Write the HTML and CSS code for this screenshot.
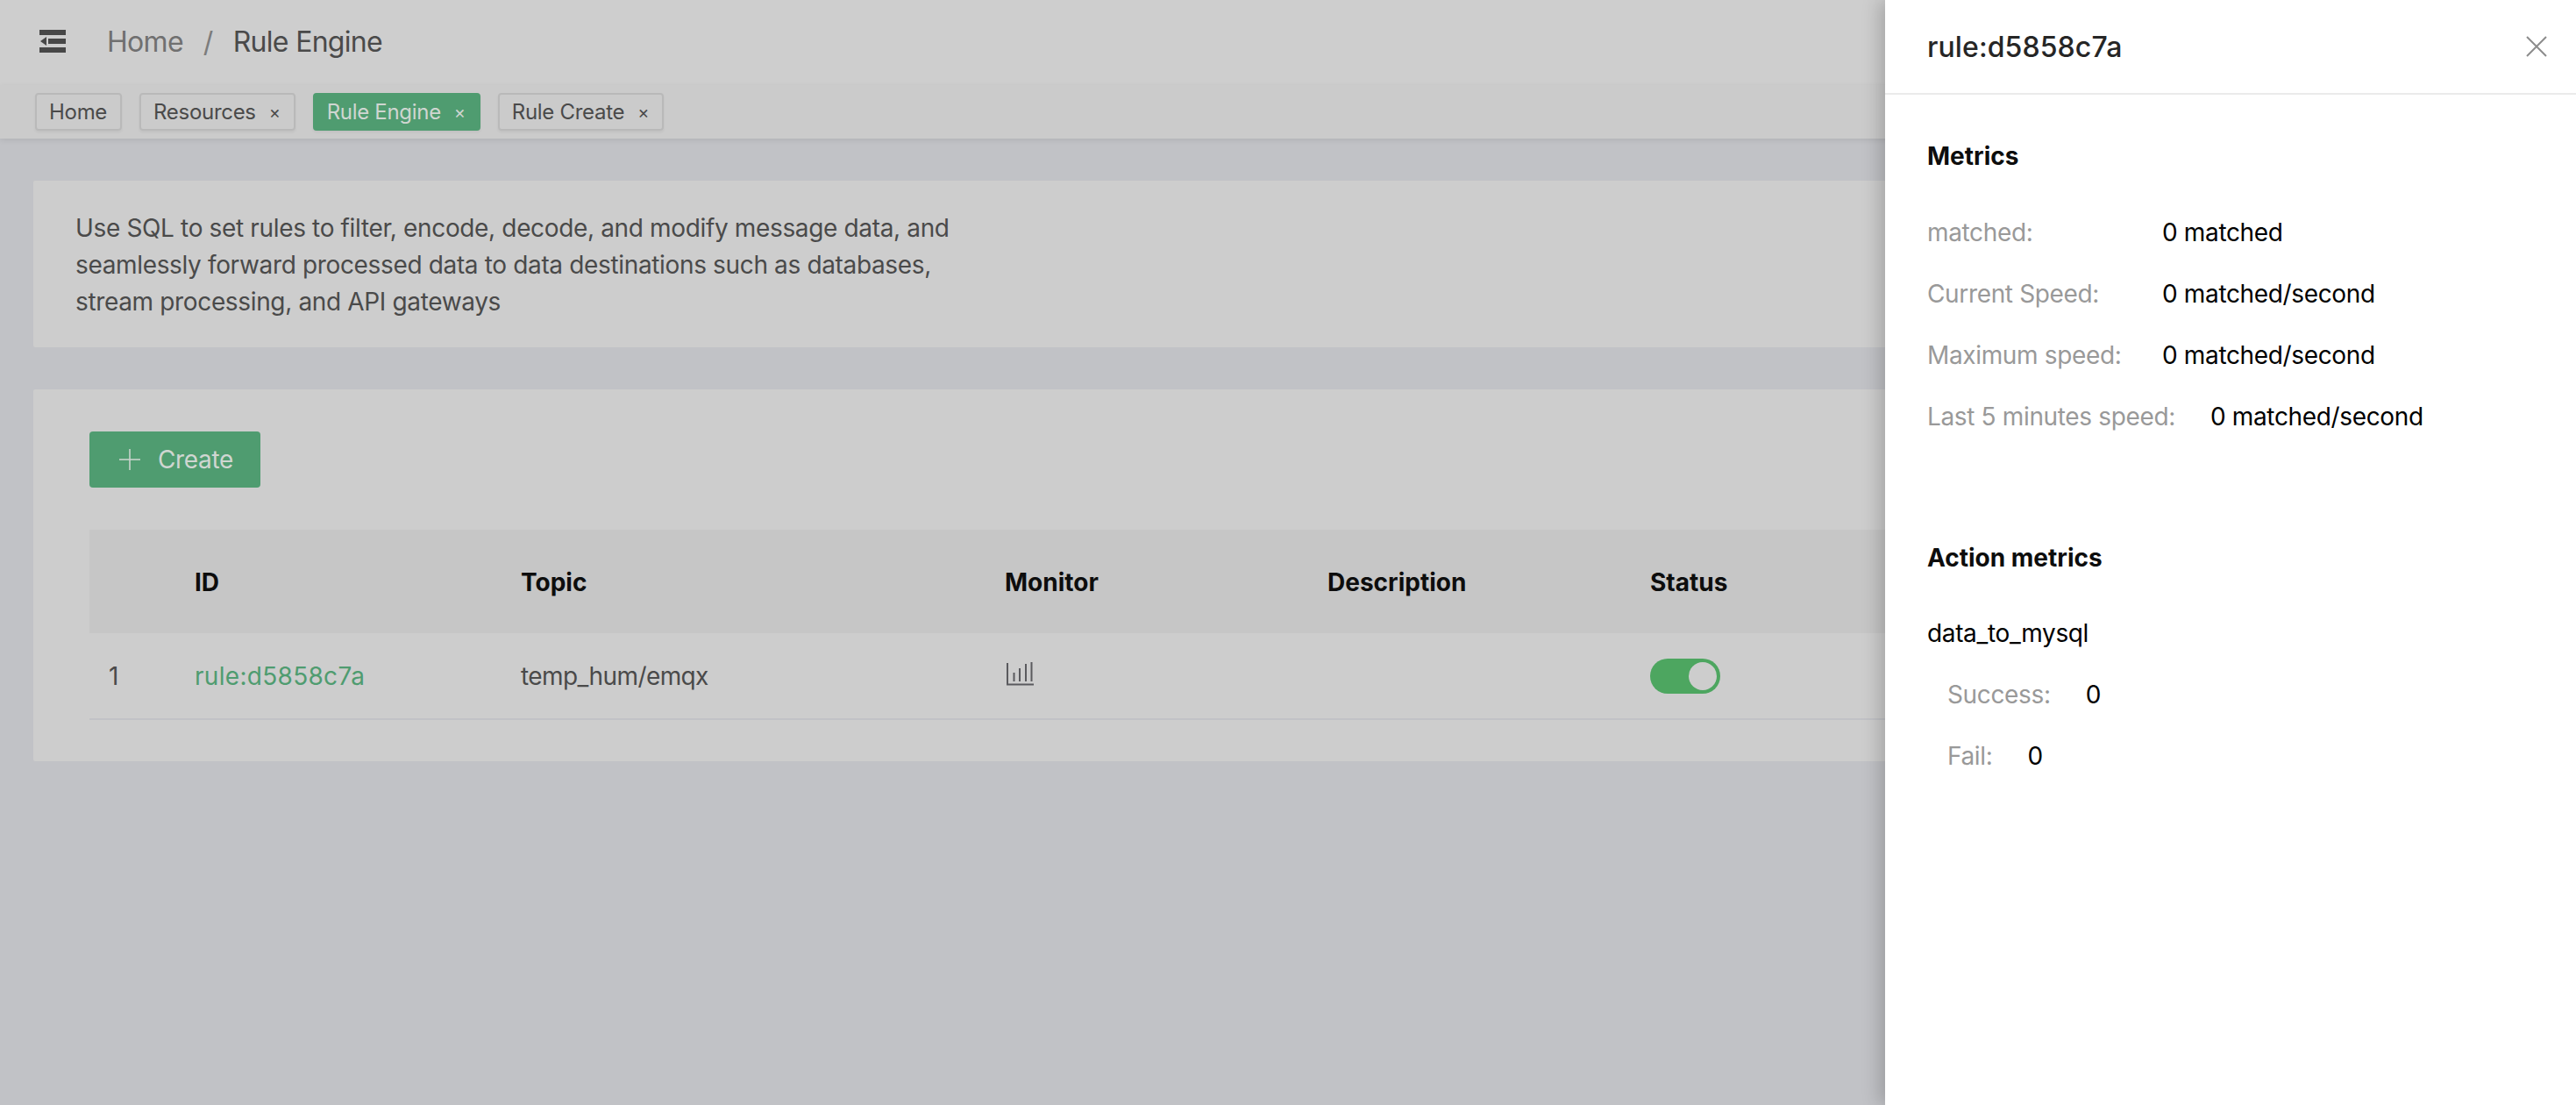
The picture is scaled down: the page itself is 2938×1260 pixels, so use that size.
FILE: index.html
```html
<!DOCTYPE html>
<html lang="en">
  <head>
    <meta charset="UTF-8" />
    <title>Rule Engine</title>
    <link rel="stylesheet" href="styles.css">
  </head>
  <body>
    <div class="app">
      <header class="topbar">
        <svg class="menu-icon" width="30" height="26" viewBox="0 0 30 26">
          <rect x="0" y="0" width="30" height="6" />
          <rect x="10" y="10" width="20" height="6" />
          <rect x="0" y="20" width="30" height="6" />
          <polygon points="1,13 8,8 8,18" />
        </svg>
        <span class="crumb">Home</span>
        <span class="crumb-sep">/</span>
        <span class="crumb-current">Rule Engine</span>
      </header>

      <nav class="tags">
        <span class="tag">Home</span>
        <span class="tag">Resources<i class="tag-x">×</i></span>
        <span class="tag tag-active">Rule Engine<i class="tag-x">×</i></span>
        <span class="tag">Rule Create<i class="tag-x">×</i></span>
      </nav>

      <main class="content">
        <section class="card intro">
          <p>
            Use SQL to set rules to filter, encode, decode, and modify message data, and<br />
            seamlessly forward processed data to data destinations such as databases,<br />
            stream processing, and API gateways
          </p>
        </section>

        <section class="card list">
          <button class="create-btn" type="button">
            <svg width="24" height="24" viewBox="0 0 24 24">
              <path d="M12 0V24M0 12H24" />
            </svg>
            Create
          </button>

          <table class="rules">
            <colgroup>
              <col class="col-index" />
              <col class="col-id" />
              <col class="col-topic" />
              <col class="col-monitor" />
              <col class="col-desc" />
              <col class="col-status" />
              <col />
            </colgroup>
            <thead>
              <tr>
                <th></th>
                <th>ID</th>
                <th>Topic</th>
                <th>Monitor</th>
                <th>Description</th>
                <th>Status</th>
                <th></th>
              </tr>
            </thead>
            <tbody>
              <tr>
                <td class="index">1</td>
                <td class="rule-link">rule:d5858c7a</td>
                <td class="rule-topic">temp_hum/emqx</td>
                <td>
                  <svg class="chart-icon" width="32" height="28" viewBox="0 0 32 28">
                    <path class="chart-axis" d="M1 2V26.5H31" />
                    <path class="chart-bars" d="M8.5 13V23M15 8V23M22 3V23M28.5 1V23" />
                  </svg>
                </td>
                <td></td>
                <td>
                  <span class="switch"><span class="switch-knob"></span></span>
                </td>
                <td></td>
              </tr>
            </tbody>
          </table>
        </section>
      </main>
    </div>

    <aside class="drawer">
      <div class="drawer-head">
        <span class="drawer-title">rule:d5858c7a</span>
        <svg class="drawer-close" width="24" height="24" viewBox="0 0 24 24">
          <path d="M1 1L23 23M23 1L1 23" />
        </svg>
      </div>
      <div class="drawer-body">
        <h3 class="metrics-title">Metrics</h3>
        <div class="metric"><span class="metric-label">matched:</span><span>0 matched</span></div>
        <div class="metric"><span class="metric-label">Current Speed:</span><span>0 matched/second</span></div>
        <div class="metric"><span class="metric-label">Maximum speed:</span><span>0 matched/second</span></div>
        <div class="metric"><span class="metric-label">Last 5 minutes speed:</span><span>0 matched/second</span></div>

        <h3 class="metrics-title action-title">Action metrics</h3>
        <div class="metric">data_to_mysql</div>
        <div class="metric metric-sub"><span class="metric-label">Success:</span><span>0</span></div>
        <div class="metric metric-sub"><span class="metric-label">Fail:</span><span>0</span></div>
      </div>
    </aside>
  </body>
</html>
```

FILE: styles.css
```css
html,
body {
  margin: 0;
  height: 1260px;
  overflow: hidden;
}
body {
  font-family: Inter, "Noto Sans", sans-serif;
  background-color: #c1c2c6;
  color: #4a4a4a;
  font-size: 28px;
  letter-spacing: -0.35px;
}
.app {
  height: 1260px;
  display: flex;
  flex-direction: column;
}
.topbar {
  height: 97px;
  box-sizing: border-box;
  padding: 0 0 3px 45px;
  display: flex;
  align-items: center;
  background-color: #cecece;
  font-size: 32px;
  letter-spacing: -0.7px;
}
.menu-icon {
  fill: #474747;
  margin-right: 47px;
}
.crumb {
  color: #707070;
}
.crumb-sep {
  color: #7c7c7c;
  margin: 0 23px;
}
.crumb-current {
  color: #4a4a4a;
}
.tags {
  height: 61px;
  box-sizing: border-box;
  padding: 9px 0 0 40px;
  display: flex;
  gap: 20px;
  background-color: #cbcbcb;
  box-shadow: 0 2px 6px rgba(0, 0, 0, 0.08);
}
.tag {
  height: 43px;
  box-sizing: border-box;
  padding: 0 15px 0 14px;
  display: flex;
  align-items: center;
  border: 2px solid #b9b9b9;
  border-radius: 4px;
  font-size: 24px;
  letter-spacing: -0.3px;
  box-shadow: 0 2px 3px rgba(0, 0, 0, 0.05);
}
.tag-active {
  background-color: #4f9c70;
  border-color: #4f9c70;
  color: #cfd6d1;
}
.tag-x {
  font-style: normal;
  font-size: 20px;
  margin-left: 15px;
}
.content {
  padding: 48px 38px 0;
  display: flex;
  flex-direction: column;
  gap: 48px;
}
.card {
  background-color: #cdcdcd;
  border-radius: 2px;
}
.intro {
  padding: 33px 48px 31px;
}
.intro p {
  margin: 0;
  line-height: 42px;
}
.list {
  height: 424px;
  box-sizing: border-box;
  padding: 48px 64px;
}
.create-btn {
  width: 195px;
  height: 64px;
  padding: 0 0 0 34px;
  display: flex;
  align-items: center;
  gap: 20px;
  background-color: #4f9c70;
  color: #cfd6d1;
  border: none;
  border-radius: 4px;
  font-family: inherit;
  font-size: 28px;
  letter-spacing: inherit;
}
.create-btn svg {
  stroke: #cfd6d1;
  stroke-width: 1.5;
  fill: none;
}
.rules {
  width: 100%;
  table-layout: fixed;
  border-collapse: collapse;
  margin-top: 48px;
}
.col-index {
  width: 120px;
}
.col-id {
  width: 372px;
}
.col-topic {
  width: 552px;
}
.col-monitor {
  width: 368px;
}
.col-desc {
  width: 368px;
}
.col-status {
  width: 300px;
}
.rules th {
  height: 118px;
  padding: 2px 0 0;
  box-sizing: border-box;
  background-color: #c6c6c6;
  color: #0d0d0d;
  font-weight: 700;
  letter-spacing: 0;
  text-align: left;
}
.rules td {
  height: 97px;
  padding: 0;
  border-bottom: 2px solid #c1c2c6;
}
.rules .index {
  padding-left: 22px;
}
.rules .rule-link {
  color: #4f9c70;
  letter-spacing: 0.3px;
}
.rules .rule-topic {
  letter-spacing: -0.6px;
}
.chart-icon {
  display: block;
  margin: -5px 0 0 2px;
}
.chart-axis {
  fill: none;
  stroke: #5a5a5e;
  stroke-width: 2;
}
.chart-bars {
  fill: none;
  stroke: #5a5a5e;
  stroke-width: 2;
}
.switch {
  width: 80px;
  height: 40px;
  margin-top: 1px;
  padding: 4px;
  box-sizing: border-box;
  display: flex;
  justify-content: flex-end;
  background-color: #4da660;
  border-radius: 20px;
}
.switch-knob {
  width: 32px;
  height: 32px;
  background-color: #cdcdcd;
  border-radius: 50%;
}
.drawer {
  position: absolute;
  top: 0;
  right: 0;
  width: 788px;
  height: 1260px;
  background-color: #ffffff;
  color: #000000;
  box-shadow: -6px 0 20px rgba(0, 0, 0, 0.2);
}
.drawer-head {
  height: 108px;
  box-sizing: border-box;
  padding: 0 33px 0 48px;
  display: flex;
  align-items: center;
  justify-content: space-between;
  border-bottom: 2px solid #ebebeb;
}
.drawer-title {
  font-size: 32px;
  font-weight: 500;
  letter-spacing: 0.1px;
  color: #262626;
}
.drawer-close {
  stroke: #8c8c8c;
  stroke-width: 2;
  fill: none;
}
.drawer-body {
  padding: 48px 48px;
}
.metrics-title {
  margin: 0 0 30px;
  height: 44px;
  line-height: 44px;
  font-size: 28px;
  font-weight: 700;
  letter-spacing: 0;
  color: #0d0d0d;
}
.action-title {
  margin-top: 104px;
  margin-bottom: 29px;
}
.metric {
  height: 70px;
  display: flex;
  align-items: center;
}
.metric-label {
  min-width: 228px;
  margin-right: 40px;
  color: #999999;
}
.metric-sub {
  padding-left: 23px;
}
.metric-sub .metric-label {
  min-width: 0;
}
```
